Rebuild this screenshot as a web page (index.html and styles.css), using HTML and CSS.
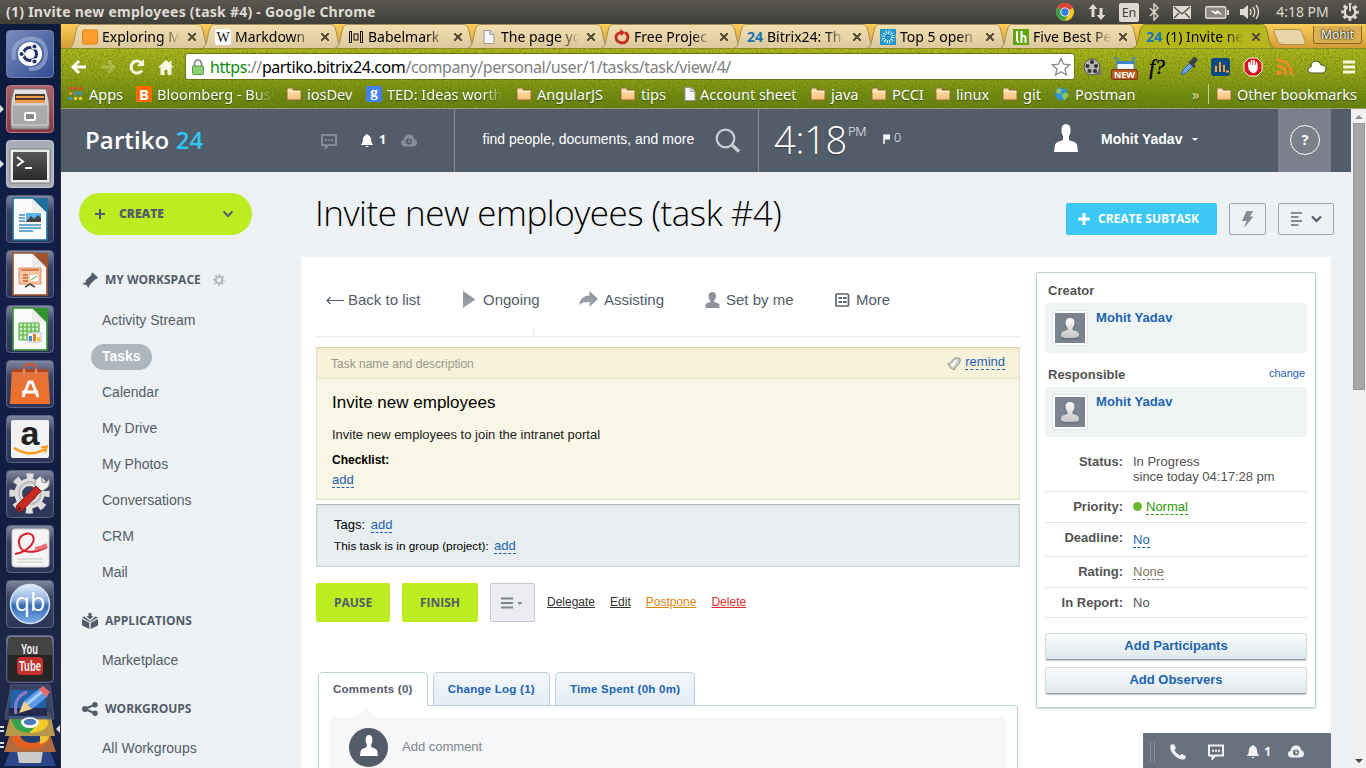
FILE: index.html
```html
<!DOCTYPE html>
<html lang="en">
<head>
<meta charset="utf-8">
<title>(1) Invite new employees (task #4)</title>
<link rel="stylesheet" href="styles.css">
</head>
<body>
<svg class="defs" width="0" height="0" aria-hidden="true">
  <defs>
    <linearGradient id="tile" x1="0" y1="0" x2="0" y2="1"><stop offset="0" stop-color="#8088a0"/><stop offset=".35" stop-color="#3a4261"/><stop offset="1" stop-color="#2b355a"/></linearGradient>
    <linearGradient id="tileBlue" x1="0" y1="0" x2="1" y2="1"><stop offset="0" stop-color="#7b8cbd"/><stop offset="1" stop-color="#314c94"/></linearGradient>
    <linearGradient id="tileRed" x1="0" y1="0" x2="0" y2="1"><stop offset="0" stop-color="#a8646c"/><stop offset="1" stop-color="#8c3442"/></linearGradient>
    <linearGradient id="silver" x1="0" y1="0" x2="0" y2="1"><stop offset="0" stop-color="#e8e8e8"/><stop offset="1" stop-color="#a2a2a2"/></linearGradient>
    <linearGradient id="darkGrey" x1="0" y1="0" x2="0" y2="1"><stop offset="0" stop-color="#585858"/><stop offset="1" stop-color="#2a2a2a"/></linearGradient>
    <linearGradient id="orange" x1="0" y1="0" x2="0" y2="1"><stop offset="0" stop-color="#e0733e"/><stop offset="1" stop-color="#f0702a"/></linearGradient>
    <linearGradient id="tabFill" x1="0" y1="0" x2="0" y2="1"><stop offset="0" stop-color="#f2e0b0"/><stop offset="1" stop-color="#dcc89e"/></linearGradient>
    <linearGradient id="folderFill" x1="0" y1="0" x2="0" y2="1"><stop offset="0" stop-color="#ffe5b5"/><stop offset="1" stop-color="#f7c078"/></linearGradient>
    <linearGradient id="orb" x1="0" y1="0" x2="0" y2="1"><stop offset="0" stop-color="#e4effb"/><stop offset=".4" stop-color="#8cb0de"/><stop offset=".55" stop-color="#3468b2"/><stop offset="1" stop-color="#7fb2ea"/></linearGradient>
    <linearGradient id="greySil" x1="0" y1="0" x2="0" y2="1"><stop offset="0" stop-color="#8b909a"/><stop offset="1" stop-color="#a0a5ae"/></linearGradient>
    <linearGradient id="whiteSil" x1="0" y1="0" x2="0" y2="1"><stop offset="0" stop-color="#fff"/><stop offset="1" stop-color="#c4c4c4"/></linearGradient>
    <filter id="grain" x="0" y="0" width="100%" height="100%"><feTurbulence type="fractalNoise" baseFrequency=".55 .6" numOctaves="2" seed="4"/><feColorMatrix values="0 0 0 0 .1  0 0 0 0 .16  0 0 0 0 0  2.2 0 0 0 -.85"/></filter>
    <symbol id="folder" viewBox="0 0 16 16"><path d="M1 4.500V3q0-1 1-1h4q1 0 1 1v1h7q1 0 1 1v8q0 1-1 1H2q-1 0-1-1z" fill="url(#folderFill)" stroke="#936b38"/><path d="M1.500 5.500h13" stroke="#fff1d2"/></symbol>
    <symbol id="sheet" viewBox="0 0 16 16"><path d="M3 1.500h6l4 4v9H3z" fill="#f6f6f6" stroke="#999"/><path d="M9 1.500v4h4" fill="#ddd" stroke="#999"/></symbol>
    <symbol id="man" viewBox="0 0 24 28"><path d="M7.500 6C7.500 2 9 0 12 0s4.500 2 4.500 6c0 3-.5 4.500-1.500 6v3.500c1 2 7 1.500 8 5.500l1 7H0l1-7c1-4 7-3.500 8-5.500V12C8 10.500 7.500 9 7.500 6z"/></symbol>
    <symbol id="chat" viewBox="0 0 16 15"><path d="M1 1h14v10H7l-2.500 3v-3H1z" fill="none" stroke="currentColor" stroke-width="2"/><path d="M4 5.200h2v2H4zM7 5.200h2v2H7zM10 5.200h2v2h-2z" fill="currentColor"/></symbol>
    <symbol id="bell" viewBox="0 0 12 13"><path d="M5.300 0h1.400v1C9.500 1.500 10 4 10.200 7c.1 2 1.800 3 1.800 4H0c0-1 1.700-2 1.800-4C2 4 2.500 1.500 5.300 1zM4.500 12h3l-.5 1H5z" fill="currentColor"/></symbol>
    <symbol id="cloud" viewBox="0 0 16 13"><path fill-rule="evenodd" d="M4 12.500C1.500 12.500 0 11 0 9c0-1.700 1-3 2.500-3.300C3 2.500 5 .5 8 .5s4.800 2 5.200 4.700C15 5.700 16 7 16 9c0 2-1.500 3.500-4 3.500zM8 4.500a3 3 0 1 0 0 6 3 3 0 0 0 0-6z" fill="currentColor"/><path d="M8 5.500v2.300h1.800" fill="none" stroke="currentColor" stroke-width="1.200"/></symbol>
    <symbol id="tabShape" viewBox="0 0 144 25"><path d="M0 24.500C5 24 5.500 18 7.500 9 9 2.500 10 .5 13.500.5h116c3.500 0 4.500 2 6 8.500 2 9 2.500 15 8 15.500"/></symbol>
    <symbol id="gear" viewBox="0 0 24 24"><circle cx="12" cy="12" r="6.600" fill="none" stroke="currentColor" stroke-width="4.400"/><circle cx="12" cy="12" r="10" fill="none" stroke="currentColor" stroke-width="3.600" stroke-dasharray="3.927" stroke-dashoffset="1.960"/></symbol>
    <symbol id="doc" viewBox="0 0 48 48"><path d="M7 3h20l14 14v28H7z" fill="#fafafa" stroke="currentColor" stroke-width="1.600"/><path d="M27 3h15v15z" fill="currentColor"/><path d="M26 4v13h14" fill="#ddd" opacity=".5"/></symbol>
  </defs>
</svg>

<div class="screen">
  <header class="menubar">
    <div class="window-title">(1) Invite new employees (task #4) - Google Chrome</div>
    <div class="indicators">
      <svg width="20" height="20" viewBox="0 0 20 20"><circle cx="10" cy="10" r="9" fill="#f7cb1d"/><path d="M10 10 2.200 5.500A9 9 0 0 1 18 6z" fill="#db4437"/><path d="M10 10 2.200 5.500A9 9 0 0 0 9.500 19l4-7z" fill="#3c9f4b"/><circle cx="10" cy="10" r="4.600" fill="#fff"/><circle cx="10" cy="10" r="3.700" fill="#3a7de0"/></svg>
      <svg width="18" height="18" viewBox="0 0 18 18" fill="#dfdbd2"><path d="M5 1l4.500 5H6.500v8h-3V6H.5zM13 17l-4.500-5h3V5h3v7h3z"/></svg>
      <span class="keyboard">En</span>
      <svg width="10" height="18" viewBox="0 0 10 18"><path d="M1 5l8 8-4 4V1l4 4-8 8" fill="none" stroke="#dfdbd2" stroke-width="1.400"/></svg>
      <svg width="18" height="13" viewBox="0 0 18 13"><rect width="18" height="13" fill="#dfdbd2"/><path d="M1 1l8 7 8-7M1 12l5-5M17 12l-5-5" fill="none" stroke="#4a4840" stroke-width="1.200"/></svg>
      <svg width="24" height="13" viewBox="0 0 24 13"><rect x=".7" y=".7" width="20" height="11.600" rx="1.500" fill="#8a8880" stroke="#dfdbd2" stroke-width="1.400"/><path d="M22 4h2v5h-2z" fill="#dfdbd2"/><path d="M5 4l6 2 1-2 6 5-6-2-1 2z" fill="#fff"/></svg>
      <svg width="20" height="16" viewBox="0 0 20 16"><path d="M0 5h3l5-4v14l-5-4H0z" fill="#dfdbd2"/><path d="M10 5q2 3 0 6M13 3q3.500 5 0 10M16 1q5 7 0 14" fill="none" stroke="#dfdbd2" stroke-width="1.400"/></svg>
      <span class="clock">4:18 PM</span>
      <svg width="18" height="18" viewBox="0 0 24 24" color="#dfdbd2"><use href="#gear"/><circle cx="12" cy="12" r="5.500" fill="#4a4840"/><path d="M12 2v8" stroke="#4a4840" stroke-width="6"/><path d="M12 1v10" stroke="#dfdbd2" stroke-width="2.500"/></svg>
    </div>
  </header>

  <div class="desktop">
    <nav class="launcher">
      <svg viewBox="0 0 48 48"><rect x=".5" y=".5" width="47" height="47" rx="4" fill="url(#tileBlue)" stroke="#7381ad"/><path d="M8 30Q5 12 22 9q18-2 18 16-2 15-17 14" fill="none" stroke="#a5b4d8" stroke-width="4" opacity=".6"/><circle cx="24" cy="24" r="12" fill="#fff"/><circle cx="24" cy="24" r="6.500" fill="none" stroke="#213569" stroke-width="3"/><g fill="#213569" stroke="#fff" stroke-width="1.200"><circle cx="15.500" cy="24" r="2.700"/><circle cx="28.500" cy="16.500" r="2.700"/><circle cx="28.500" cy="31.500" r="2.700"/></g></svg>
      <svg viewBox="0 0 48 48"><rect x=".5" y=".5" width="47" height="47" rx="4" fill="url(#tileRed)" stroke="#bb7b85"/><path d="M8 4h32l3 12v26q0 2-2 2H7q-2 0-2-2V16z" fill="url(#silver)" stroke="#777"/><path d="M9 9h30v9H9z" fill="#4d3a2c"/><path d="M10 11h28v2H10zM9 15h30v3H9z" fill="#f29b4c"/><path d="M6 20h36v20H6z" fill="#a9a9a9" stroke="#d8d8d8"/><rect x="19" y="28" width="10" height="7" rx="1" fill="#888" stroke="#fff" stroke-width="2"/></svg>
      <svg viewBox="0 0 48 48"><rect x=".5" y=".5" width="47" height="47" rx="4" fill="#a9adb7" stroke="#c6c9d0"/><rect x="4" y="9" width="40" height="34" rx="1" fill="#eee" stroke="#777"/><rect x="7" y="12" width="34" height="28" fill="url(#darkGrey)"/><path d="M11 17l6 4.500-6 4.500M19 28h7" fill="none" stroke="#fff" stroke-width="2"/></svg>
      <svg viewBox="0 0 48 48"><rect x=".5" y=".5" width="47" height="47" rx="4" fill="url(#tile)" stroke="#5a6382"/><use href="#doc" color="#1f6d9c"/><path d="M13 20h6M13 23h6M13 26h6M13 30h22M13 33h22M13 36h14" stroke="#3c8fc4" stroke-width="1.600"/><path d="M20 18h15v9H20z" fill="#59b4e8"/><path d="M20 27l5-6 3 3 4-4 3 3v4z" fill="#444"/></svg>
      <svg viewBox="0 0 48 48"><rect x=".5" y=".5" width="47" height="47" rx="4" fill="url(#tile)" stroke="#5a6382"/><use href="#doc" color="#a0522e"/><path d="M13 18h22v16H13z" fill="#f6c4a6" stroke="#e3905f"/><path d="M15 20h18M17 25h5M17 28h5M17 31h5" stroke="#cb6535" stroke-width="1.500"/><path d="M24 25h8v6h-8z" fill="#fff"/><path d="M25 30l3-2 3-2" stroke="#3eb13b" fill="none"/><path d="M19 37l5-3 5 3" fill="none" stroke="#444" stroke-width="1.500"/></svg>
      <svg viewBox="0 0 48 48"><rect x=".5" y=".5" width="47" height="47" rx="4" fill="url(#tile)" stroke="#5a6382"/><use href="#doc" color="#339330"/><path d="M13 18h20v17H13z" fill="#cdf0c3"/><path d="M13 18h20M13 22h20M13 26h20M13 30h20M13 35h12M13 18v17M17 18v17M21 18v17M25 18v10M29 18v9M33 18v9" stroke="#55ad43" stroke-width="1.200"/><path d="M22 28h13v9H22z" fill="#fff" stroke="#bbb"/><path d="M23 31h3v5h-3z" fill="#3d8fd1"/><path d="M27 29h3v7h-3z" fill="#e8772e"/><path d="M31 32h3v4h-3z" fill="#edc431"/></svg>
      <svg viewBox="0 0 48 48"><rect x=".5" y=".5" width="47" height="47" rx="4" fill="url(#tile)" stroke="#5a6382"/><path d="M18 14V8q1-4 6-4t6 4v6" fill="none" stroke="#c8583a" stroke-width="2.500"/><path d="M6 9h36l2 35H4z" fill="url(#orange)"/><path d="M6 9h36v3H6z" fill="#a84725"/><path d="M18 9v5M30 9v5" stroke="#e58a68" stroke-width="2.500"/><path d="M17 37l6-15h3l6 15M16 32h16" fill="none" stroke="#fff" stroke-width="3"/></svg>
      <svg viewBox="0 0 48 48"><rect x=".5" y=".5" width="47" height="47" rx="4" fill="url(#tile)" stroke="#5a6382"/><rect x="5" y="5" width="38" height="38" rx="2" fill="#f2f2f2"/><text x="24" y="30" text-anchor="middle" class="glyph-amazon">a</text><path d="M8 33q16 10 31 1" fill="none" stroke="#f79a1c" stroke-width="2.500"/><path d="M35 32.500l6-1-2 6" fill="none" stroke="#f79a1c" stroke-width="2"/></svg>
      <svg viewBox="0 0 48 48"><rect x=".5" y=".5" width="47" height="47" rx="4" fill="url(#tile)" stroke="#5a6382"/><svg class="cog" x="3" y="3" width="41" height="41" viewBox="0 0 24 24" color="#dedede"><use href="#gear"/></svg><circle cx="24" cy="23" r="11" fill="none" stroke="#bcbcbc" stroke-width="2"/><path d="M29 16q-1-7 6-10l1 6 4 1 3-4q2 8-5 11l-3 1L32 20z" fill="#f1f1f1" stroke="#8b8b8b"/><path d="M30 16l5 5L16 41q-3 2-5-1-2-2 0-5z" fill="#c92a21" stroke="#871711"/><circle cx="13.500" cy="38.500" r="1.500" fill="#3b1a18"/></svg>
      <svg viewBox="0 0 48 48"><rect x=".5" y=".5" width="47" height="47" rx="4" fill="url(#tile)" stroke="#5a6382"/><rect x="6" y="4" width="37" height="38" rx="3" fill="#f5f5f5" stroke="#ccc"/><path d="M9 29C22 27 30 17 27 11c-3-5-15-2-14 7 1 11 14 11 28 4" fill="none" stroke="#d5252f" stroke-width="2"/><path d="M29 24q6-1 12-4" stroke="#f0767c" stroke-width="4" fill="none"/><path d="M11 34h26M11 37h26" stroke="#c6c6c6"/></svg>
      <svg viewBox="0 0 48 48"><rect x=".5" y=".5" width="47" height="47" rx="4" fill="url(#tile)" stroke="#5a6382"/><circle cx="24" cy="24" r="19.500" fill="url(#orb)" stroke="#d5e4f5" stroke-width="1.500"/><text x="24" y="31" text-anchor="middle" class="glyph-qb">qb</text></svg>
      <svg viewBox="0 0 48 48"><rect x=".5" y=".5" width="47" height="47" rx="4" fill="url(#tile)" stroke="#5a6382"/><rect x="2" y="2" width="44" height="44" rx="4" fill="#272424"/><path d="M2 6q0-4 4-4h36q4 0 4 4v14H2z" fill="#625f5f" opacity=".5"/><rect x="11" y="22" width="26" height="18" rx="4" fill="#c4302b"/><text x="15" y="19" textLength="17" lengthAdjust="spacingAndGlyphs" class="glyph-tube">You</text><text x="13" y="36" textLength="22" lengthAdjust="spacingAndGlyphs" class="glyph-tube">Tube</text></svg>
      <svg class="stack" viewBox="0 0 61 84"><path d="M10 67h40l6 15H4z" fill="#2c4687"/><path d="M17 67h26l-2 12H19z" fill="#c9cac9"/><path d="M10 50h40l6 18H4z" fill="#b16a40"/><path d="M12 52h36q0 13-18 13T12 52z" fill="#e2611c"/><path d="M20 52h24q-2 7-12 7-9 0-12-7z" fill="#203e73"/><path d="M40 52h9q0 6-9 8z" fill="#f0c23a"/><path d="M11 28h39l5 24H5z" fill="#b79749"/><ellipse cx="30" cy="39" rx="18" ry="10" fill="#f0cd28"/><path d="M12 37q2-12 32-6l-14 6z" fill="#d64a37"/><path d="M12 36q0 12 17 13l7-7-13-5-8-5z" fill="#37a34c"/><ellipse cx="30" cy="38" rx="8" ry="5" fill="#4a7bb8" stroke="#fff" stroke-width="2"/><path d="M11 1h39l4 34H5z" fill="#3d4866" opacity=".85" stroke="#5b6584"/><ellipse cx="30" cy="38" rx="7" ry="4" fill="#4a7bb8" stroke="#fff" stroke-width="1.500"/><path d="M11 6h34l2 27H9z" fill="#2162a7"/><path d="M9 24h38v8H9z" fill="#25294c"/><path d="M27 8q-14 5-11 22" fill="none" stroke="#8d7bc6" stroke-width="3"/><path d="M24 17 40 4l8 8-16 13z" fill="#5b9be8"/><path d="M27 20 43 7" stroke="#a9d0fa" stroke-width="3"/><path d="M24 17l8 8-13 4z" fill="#f3d190"/><path d="M39 5l4-3 7 6-4 5z" fill="#e86c6c"/><path d="M0 43h4M0 47h4M0 59h4M0 63h4" stroke="#ddd" stroke-width="2"/><path d="M60 41v8l-4-4z" fill="#ddd"/></svg>
      <i class="pip pip-files"></i><i class="pip pip-terminal"></i>
    </nav>

    <section class="browser">
      <div class="tabstrip">
        <div class="tab"><svg class="tab-bg"><use href="#tabShape"/></svg><svg class="fav" viewBox="0 0 16 16"><rect x=".5" y="1" width="15" height="14" rx="1.500" fill="#ff9d2e" stroke="#e07f12"/></svg><span class="tab-title">Exploring M</span><b class="close"></b></div>
        <div class="tab"><svg class="tab-bg"><use href="#tabShape"/></svg><svg class="fav" viewBox="0 0 16 16"><rect width="16" height="16" rx="2" fill="#fff"/><text x="8" y="13" text-anchor="middle" class="glyph-w">W</text></svg><span class="tab-title">Markdown</span><b class="close"></b></div>
        <div class="tab"><svg class="tab-bg"><use href="#tabShape"/></svg><svg class="fav" viewBox="0 0 16 16" fill="none" stroke="#111"><path d="M4 2.500H1.500v11H4M3.500 2.500v11M12 2.500h2.500v11H12M12.500 2.500v11"/><rect x="6" y="5" width="4" height="6"/></svg><span class="tab-title">Babelmark</span><b class="close"></b></div>
        <div class="tab"><svg class="tab-bg"><use href="#tabShape"/></svg><svg class="fav" viewBox="0 0 16 16"><use href="#sheet"/></svg><span class="tab-title">The page yo</span><b class="close"></b></div>
        <div class="tab"><svg class="tab-bg"><use href="#tabShape"/></svg><svg class="fav" viewBox="0 0 16 16"><path d="M11 3.500Q14 5 14 8.500 13 14 8 14 2 13 2 8.500 2 4 8 3.500" fill="none" stroke="#c62a20" stroke-width="2.800"/><path d="M6 0l5 3.500L7 7z" fill="#c62a20"/></svg><span class="tab-title">Free Projec</span><b class="close"></b></div>
        <div class="tab"><svg class="tab-bg"><use href="#tabShape"/></svg><span class="fav fav24">24</span><span class="tab-title">Bitrix24: Th</span><b class="close"></b></div>
        <div class="tab"><svg class="tab-bg"><use href="#tabShape"/></svg><svg class="fav" viewBox="0 0 16 16"><rect width="16" height="16" fill="#1e94c8"/><circle cx="8" cy="8" r="4.500" fill="none" stroke="#fff" stroke-width="3" stroke-dasharray="1 1.350"/><circle cx="8" cy="8" r="7" fill="none" stroke="#bde7fa" stroke-dasharray="1 2"/></svg><span class="tab-title">Top 5 open</span><b class="close"></b></div>
        <div class="tab"><svg class="tab-bg"><use href="#tabShape"/></svg><svg class="fav" viewBox="0 0 16 16"><rect width="16" height="16" fill="#61a510"/><path d="M4 2v9q0 2 2 2M8.500 2v12M8.500 9q0-2 2-2t2 2v5" fill="none" stroke="#fff" stroke-width="2"/></svg><span class="tab-title">Five Best Pe</span><b class="close"></b></div>
        <div class="tab active"><svg class="tab-bg"><use href="#tabShape"/></svg><span class="fav fav24">24</span><span class="tab-title">(1) Invite ne</span><b class="close"></b></div>
        <svg class="newtab" width="34" height="16" viewBox="0 0 34 16"><path d="M2 .5h23q3 0 4 3l3 9q1 3-2 3H10q-4 0-5-3L1 3Q0 .5 2 .5z" fill="#e8d5a7" stroke="#b28f4c"/></svg>
        <span class="profile">Mohit</span>
      </div>
      <div class="chrome">
        <svg class="grain" width="1305" height="60"><rect width="1305" height="60" filter="url(#grain)"/></svg>
        <div class="toolbar">
          <div class="nav-buttons">
            <svg width="18" height="18" viewBox="0 0 18 18"><path d="M9 3 3 9l6 6M3 9h13" fill="none" stroke="#fff" stroke-width="3"/></svg>
            <svg width="18" height="18" viewBox="0 0 18 18" opacity=".3"><path d="M9 3l6 6-6 6M15 9H2" fill="none" stroke="#e5eab0" stroke-width="3"/></svg>
            <svg width="18" height="18" viewBox="0 0 18 18"><path d="M14 12.500A6 6 0 1 1 13 4.500" fill="none" stroke="#f6f8e4" stroke-width="3"/><path d="M9.500 8V7l6.500-6v7z" fill="#f6f8e4"/></svg>
            <svg width="18" height="18" viewBox="0 0 18 18"><path d="M9 2 1 9.500h2.500V17h4v-5h3v5h4V9.500H17l-2.500-2.300V3h-2v2.200z" fill="#f6f8e4"/></svg>
          </div>
          <div class="omnibox">
            <svg width="12" height="16" viewBox="0 0 12 16"><path d="M2.500 8V4.500Q3 1 6 1t3.500 3.500V8" fill="none" stroke="#888" stroke-width="1.700"/><rect x=".5" y="7" width="11" height="8.500" rx="1" fill="#8cd172" stroke="#569a43"/></svg>
            <span class="url"><em>https</em>://<strong>partiko.bitrix24.com</strong>/company/personal/user/1/tasks/task/view/4/</span>
            <svg width="20" height="19" viewBox="0 0 20 19"><path d="M10 1.500l2.500 5.700 6.200.6-4.700 4.100 1.400 6.100L10 14.800 4.600 18 6 11.900 1.300 7.800l6.200-.6z" fill="#fff" stroke="#8a8a8a" stroke-width="1.300"/></svg>
          </div>
          <div class="extensions">
            <svg width="20" height="20" viewBox="0 0 20 20"><path d="M14 4q2 8 5 11l-1 3-7 0z" fill="#777"/><circle cx="9" cy="10" r="8" fill="#b5b5b5" stroke="#555"/><g fill="#333"><circle cx="9" cy="5" r="2"/><circle cx="4.500" cy="9" r="2"/><circle cx="13" cy="9" r="2"/><circle cx="6.500" cy="14" r="2"/><circle cx="12" cy="14" r="2"/></g></svg>
            <svg class="new-badge" width="28" height="24" viewBox="0 0 28 24"><path d="M6 4V1H3M22 4V1h3" stroke="#4a87c9" fill="none" stroke-width="1.500"/><path d="M6 5h17v8H6z" fill="#eef5fc" stroke="#4a87c9"/><path d="M6 4h17v3H6z" fill="#3f83c8"/><rect x=".5" y="12.500" width="26" height="10" rx="1.500" fill="#b75a21" stroke="#80390d"/><text x="13.500" y="21" text-anchor="middle" class="glyph-new">NEW</text></svg>
            <span class="fquery">f?</span>
            <svg width="20" height="20" viewBox="0 0 20 20"><path d="M2 18l2-5 7-7 3 3-7 7z" fill="#6da2ed" stroke="#355fa8"/><path d="M9 5l6 6 2-2-2-2 3-3q1-3-2-4-2 0-5 4z" fill="#3b3f46"/></svg>
            <svg width="20" height="20" viewBox="0 0 20 20"><rect x="0" y="1" width="19" height="18" rx="3" fill="#0a4a80"/><path d="M5 9v6M9 5v10M13 8v7M15 14.500h3" stroke="#ffa13a" stroke-width="2"/></svg>
            <svg width="20" height="20" viewBox="0 0 20 20"><path d="M6 1h8l5 5v8l-5 5H6l-5-5V6z" fill="#d41920" stroke="#f7f2ee"/><path d="M6 9V6M8.500 9V4M11 9V4M13.500 10V6" stroke="#fff" stroke-width="1.800" stroke-linecap="round"/><path d="M5.500 8h9v4q-1 4-4 4-3 0-5-4z" fill="#fff"/></svg>
            <svg width="20" height="20" viewBox="0 0 20 20"><circle cx="4" cy="16" r="2.500" fill="#ee8a29"/><path d="M2 9q8 0 9 9M2 3q14 1 15 15" fill="none" stroke="#ee8a29" stroke-width="3"/></svg>
            <svg width="20" height="14" viewBox="0 0 20 14"><path d="M4 13Q0 12 1 9q0-2 3-2 0-6 5-6 4 0 5 4 5 0 5 4 0 3-3 4z" fill="#fff" stroke="#46531a"/></svg>
            <svg width="14" height="16" viewBox="0 0 14 16"><path d="M1 3h12M1 8h12M1 13h12" stroke="#f5f7dc" stroke-width="3"/></svg>
          </div>
        </div>
        <div class="bookmarks">
          <span><svg viewBox="0 0 16 16"><path d="M1 1h3v3H1zM6 1h3v3H6zM11 1h3v3h-3z" fill="#e8402d"/><path d="M1 6h3v3H1z" fill="#e8902d"/><path d="M6 6h3v3H6zM11 6h3v3h-3zM1 11h3v3H1z" fill="#3f8fe8"/><path d="M6 11h3v3H6zM11 11h3v3h-3z" fill="#f3ca34"/></svg>Apps</span>
          <span><i class="ico bb">B</i><em class="fade">Bloomberg - Busi</em></span>
          <span><svg viewBox="0 0 16 16"><use href="#folder"/></svg>iosDev</span>
          <span><i class="ico gg">g</i><em class="fade">TED: Ideas worth</em></span>
          <span><svg viewBox="0 0 16 16"><use href="#folder"/></svg>AngularJS</span>
          <span><svg viewBox="0 0 16 16"><use href="#folder"/></svg>tips</span>
          <span class="tight"><svg viewBox="0 0 16 16"><use href="#sheet"/></svg>Account sheet</span>
          <span><svg viewBox="0 0 16 16"><use href="#folder"/></svg>java</span>
          <span><svg viewBox="0 0 16 16"><use href="#folder"/></svg>PCCI</span>
          <span><svg viewBox="0 0 16 16"><use href="#folder"/></svg>linux</span>
          <span><svg viewBox="0 0 16 16"><use href="#folder"/></svg>git</span>
          <span><svg viewBox="0 0 16 16"><circle cx="7.500" cy="8" r="6.500" fill="#2f91d0"/><path d="M3 3q4-1 5 1l-2 4-4-1zM8 8l4-2 3 3-4 5q-3-1-3-6z" fill="#8cc46a"/></svg>Postman</span>
          <span class="more">»</span>
          <i class="divider"></i>
          <span><svg viewBox="0 0 16 16"><use href="#folder"/></svg>Other bookmarks</span>
        </div>
      </div>

      <div class="viewport">
        <div class="page">
          <header class="top">
            <div class="logo">Partiko <span>24</span></div>
            <div class="notices">
              <svg width="16" height="15"><use href="#chat"/></svg>
              <svg class="on" width="12" height="13"><use href="#bell"/></svg><b>1</b>
              <svg width="16" height="13"><use href="#cloud"/></svg>
            </div>
            <div class="search"><span>find people, documents, and more</span><svg width="26" height="26" viewBox="0 0 26 26" fill="none" stroke="#c9ced5"><circle cx="10.500" cy="10.500" r="8.800" stroke-width="2.200"/><path d="M16.500 16.500l7.500 7" stroke-width="3.400"/></svg></div>
            <div class="time"><span class="hm">4:18</span><sup>PM</sup><svg width="8" height="10" viewBox="0 0 8 10"><path d="M1 .5V10" stroke="#fff" stroke-width="1.500"/><path d="M1 .5h6v5H1z" fill="#fff"/></svg><span class="flags">0</span></div>
            <div class="user"><svg width="24" height="28" fill="#fff"><use href="#man"/></svg><b>Mohit Yadav</b><i></i></div>
            <div class="help"><span>?</span></div>
          </header>

          <div class="body">
            <aside class="side">
              <div class="create"><svg width="12" height="12" viewBox="0 0 12 12"><path d="M6 1v10M1 6h10" stroke="#535c69" stroke-width="2"/></svg><b>CREATE</b><svg width="12" height="8" viewBox="0 0 12 8"><path d="M1.500 1.500 6 6l4.500-4.500" fill="none" stroke="#535c69" stroke-width="2"/></svg></div>
              <h4><svg width="16" height="16" viewBox="0 0 16 16"><path d="M10.500.5 16 5.500 14.500 7 13 7.500 8 12.500 6.500 16 4.500 13 0 12 4 10 3.500 8.500 9 3.500 9.500 1.500z" fill="#535c69"/></svg>MY WORKSPACE<svg class="gear" width="12" height="12" viewBox="0 0 24 24" color="#b4bac1"><use href="#gear"/></svg></h4>
              <a>Activity Stream</a><a class="current"><span>Tasks</span></a><a>Calendar</a><a>My Drive</a><a>My Photos</a><a>Conversations</a><a>CRM</a><a>Mail</a>
              <h4 class="later"><svg width="16" height="16" viewBox="0 0 16 16" fill="#535c69"><path d="M6.500 0h3v3h2L8 6.500 4.500 3h2z"/><path d="M0 4.500l2.500-1L8 8l5.500-4.500 2.500 1L8 9zM0 6l7.300 3.700V16L0 12.500zM16 6 8.700 9.700V16l7.300-3.500z"/></svg>APPLICATIONS</h4>
              <a>Marketplace</a>
              <h4 class="later"><svg width="16" height="14" viewBox="0 0 16 14"><path d="M13 2.500 3 7l10 4.500" fill="none" stroke="#535c69" stroke-width="2"/><g fill="#535c69"><circle cx="13" cy="2.700" r="2.700"/><circle cx="3" cy="7" r="3"/><circle cx="13" cy="11.300" r="2.700"/></g></svg>WORKGROUPS</h4>
              <a>All Workgroups</a>
            </aside>

            <div class="work">
              <div class="heading">
                <h1>Invite new employees (task #4)</h1>
                <div class="btn-sub"><svg width="12" height="12" viewBox="0 0 12 12"><path d="M6 0v12M0 6h12" stroke="#fff" stroke-width="3"/></svg><span>CREATE SUBTASK</span></div>
                <div class="btn-o bolt"><svg width="12" height="17" viewBox="0 0 12 17"><path d="M4.500 0H11L8 5.500h3.500L2 17l2.500-7H0z" fill="#868b96"/></svg></div>
                <div class="btn-o list"><svg width="11" height="14" viewBox="0 0 11 14"><path d="M0 1h11M0 5h7.500M0 9h11M0 13h7.500" stroke="#868b96" stroke-width="2"/></svg><svg width="11" height="8" viewBox="0 0 11 8"><path d="M1 1.500l4.500 4.500L10 1.500" fill="none" stroke="#535c69" stroke-width="2.200"/></svg></div>
              </div>

              <div class="sheet">
                <div class="task">
                  <div class="tasknav">
                    <span><svg class="back" width="22" height="16" viewBox="0 0 22 16"><path d="M4.500 5 1 8.500 4.500 12M1 8.500h17" fill="none" stroke="#535c69" stroke-width="1.100"/></svg>Back to list</span>
                    <span><svg width="20" height="17" viewBox="0 0 20 17"><path d="M0 0l12.500 8.500L0 17z" fill="url(#greySil)"/></svg>Ongoing</span>
                    <span><svg width="25" height="17" viewBox="0 0 25 17"><path d="M0 14q1-9 10.500-9.500V0L19 8l-8.500 8v-5Q4 10.500 0 14z" fill="url(#greySil)"/></svg>Assisting</span>
                    <span><svg width="21" height="16" viewBox="0 0 21 16"><path d="M3.500 4.500Q3.500 0 7.300 0T11 4.500Q10.700 8 9 9v1q5 1 5.500 2.500V15q0 1-1 1h-12q-1 0-1-1v-2.500q0-1.500 5-2.500V9Q3.700 8 3.500 4.500z" fill="#8d929c"/></svg>Set by me</span>
                    <span><svg width="21" height="14" viewBox="0 0 21 14"><rect x="1" y="1" width="12.500" height="12" rx="1" fill="none" stroke="#5a6370" stroke-width="1.700"/><path d="M3.500 5h3.500M8 5h3.500M3.500 9h3.500M8 9h3.500" stroke="#5a6370" stroke-width="2"/></svg>More</span>
                    <i class="tick"></i>
                  </div>
                  <div class="desc">
                    <div class="desc-head"><span>Task name and description</span><svg width="14" height="14" viewBox="0 0 14 14"><path d="M.8 6.500 2 7l5-5.500Q10 0 13 1.500 14 5 11 8l-3 3-.5 2L5.500 12 2.500 10z" fill="#cfcfcb" stroke="#8a8a84" stroke-width=".9"/><path d="M4 8l5-5.500L10 4l-4 6z" fill="#fbfbf8"/></svg><a class="dash">remind</a></div>
                    <div class="desc-body">
                      <h2>Invite new employees</h2>
                      <p>Invite new employees to join the intranet portal</p>
                      <b>Checklist:</b>
                      <div class="addline"><a class="dash">add</a></div>
                    </div>
                  </div>
                  <div class="meta">
                    <div class="tags">Tags: <a class="dash">add</a></div>
                    <div class="group">This task is in group (project): <a class="dash">add</a></div>
                  </div>
                  <div class="actions">
                    <div class="go pause">PAUSE</div><div class="go finish">FINISH</div>
                    <div class="menu"><svg width="21" height="12" viewBox="0 0 21 12"><path d="M0 1.500h12M0 6h12M0 10.500h12" stroke="#80868e" stroke-width="2"/><path d="M16 5h5.500L18.700 8z" fill="#80868e"/></svg></div>
                    <a>Delegate</a><a>Edit</a><a class="postpone">Postpone</a><a class="delete">Delete</a>
                  </div>
                  <div class="ctabs"><span class="sel">Comments (0)</span><span>Change Log (1)</span><span>Time Spent (0h 0m)</span></div>
                  <div class="cpanel">
                    <div class="cbox"><i class="notch"></i><div class="avatar"><svg width="18" height="21" viewBox="0 0 24 28" fill="#fff"><use href="#man"/></svg></div><span>Add comment</span></div>
                  </div>
                </div>

                <div class="info">
                  <div class="cap"><b>Creator</b></div>
                  <div class="person"><div class="pic"><svg width="18" height="20" viewBox="0 0 18 20"><path d="M4.500 5Q4.500 0 9 0t4.500 5Q13 9 11.500 10v2q6 1 6.500 4v2q0 2-9 2t-9-2v-2q.5-3 6.500-4v-2Q5 9 4.500 5z" fill="url(#whiteSil)"/></svg></div><b>Mohit Yadav</b></div>
                  <div class="cap second"><b>Responsible</b><a>change</a></div>
                  <div class="person"><div class="pic"><svg width="18" height="20" viewBox="0 0 18 20"><path d="M4.500 5Q4.500 0 9 0t4.500 5Q13 9 11.500 10v2q6 1 6.500 4v2q0 2-9 2t-9-2v-2q.5-3 6.500-4v-2Q5 9 4.500 5z" fill="url(#whiteSil)"/></svg></div><b>Mohit Yadav</b></div>
                  <div class="row status"><b>Status:</b><span>In Progress<br>since today 04:17:28 pm</span></div>
                  <div class="row priority"><b>Priority:</b><span><i class="dot"></i><a class="dash">Normal</a></span></div>
                  <div class="row deadline"><b>Deadline:</b><span><a class="dash">No</a></span></div>
                  <div class="row rating"><b>Rating:</b><span><a class="dash">None</a></span></div>
                  <div class="row report"><b>In Report:</b><span>No</span></div>
                  <div class="wide">Add Participants</div>
                  <div class="wide observers">Add Observers</div>
                </div>
              </div>
            </div>
          </div>

          <div class="dock">
            <i class="grip"></i>
            <svg width="16" height="16" viewBox="0 0 16 16"><path d="M1 .5l3-.3 2 4-1.700 1.700Q6 9.500 10 11.500l1.800-1.700 4 2.200-.5 2.700Q12 17 7 13.500 1.500 9.500.3 5 0 2 1 .5z" fill="currentColor"/></svg>
            <svg width="16" height="16"><use href="#chat"/></svg>
            <svg width="12" height="13"><use href="#bell"/></svg><b>1</b>
            <svg width="16" height="13"><use href="#cloud"/></svg>
          </div>
        </div>
        <div class="scrollbar"><i class="up"></i><i class="thumb"></i><i class="down"></i></div>
      </div>
    </section>
  </div>
</div>
</body>
</html>
```

FILE: styles.css
```css
* { box-sizing: border-box; }
body { margin: 0; width: 1366px; height: 768px; overflow: hidden; font-family: "Liberation Sans", Arial, sans-serif; font-size: 13px; color: #000; }
svg { display: block; flex: none; }
.defs { position: absolute; }
i, em { font-style: normal; }
h1, h2, h4, p { margin: 0; font-weight: normal; }
.screen { display: flex; flex-direction: column; width: 1366px; height: 768px; overflow: hidden; }

/* desktop menu bar */
.menubar { display: flex; justify-content: space-between; height: 24px; background: linear-gradient(#5a5850, #3e3d38); font-family: "Noto Sans", sans-serif; color: #dfdbd2; }
.window-title { padding-left: 6px; font-size: 14px; font-weight: 700; line-height: 23px; letter-spacing: .25px; white-space: nowrap; }
.indicators { display: grid; grid-template-columns: 32px 32px 32px 18px 38px 32px 34px 71px 24px; padding-right: 4px; place-items: center; }
.keyboard { width: 20px; height: 19px; border-radius: 2px; background: #dfdbd2; color: #3c3b37; font-size: 12.500px; line-height: 19px; text-align: center; }
.clock { font-size: 14px; line-height: 24px; white-space: nowrap; }

.desktop { display: flex; height: 744px; }

/* launcher */
.launcher { position: relative; display: flex; flex-direction: column; align-items: center; gap: 7px; width: 61px; height: 744px; padding: 6px 1px 0 0; overflow: hidden; background: linear-gradient(#0c1b3d, #131f4a 40%, #101d40 70%, #22294b 88%, #101e45); border-right: 1px solid #2c2c34; }
.launcher > svg { width: 48px; height: 48px; }
.launcher > .stack { width: 61px; height: 84px; margin: -6px -1px 0 0; }
.glyph-amazon { font: 700 34px "Liberation Sans", sans-serif; fill: #222; }
.glyph-qb { font: 25px "Open Sans", sans-serif; fill: #fff; }
.glyph-tube { font: 700 14px "Liberation Sans", sans-serif; fill: #eee; }
.glyph-w { font: 14px "Liberation Serif", serif; fill: #111; }
.glyph-new { font: 700 9px "Noto Sans", sans-serif; fill: #fff; }
.pip { position: absolute; left: 0; width: 0; height: 0; border: 4px solid transparent; border-left-color: #ddd; border-right-width: 0; }
.pip-files { top: 81px; }
.pip-terminal { top: 136px; }

/* browser frame */
.browser { width: 1305px; font-family: "Noto Sans", sans-serif; }
.tabstrip { display: flex; height: 24px; padding-left: 7px; background: linear-gradient(#fccf58, #d49c33); }
.tab { position: relative; display: flex; align-items: center; width: 133px; height: 24px; padding: 2px 0 0 14px; flex: none; }
.tab-bg { position: absolute; left: 0; top: 0; width: 144px; height: 25px; fill: url(#tabFill); stroke: #a78b54; }
.tab.active .tab-bg { fill: #b5b71c; stroke: #80801f; }
.fav, .tab-title, .close { position: relative; }
.fav { width: 16px; height: 16px; flex: none; }
.fav24 { font: 700 14px/16px "Open Sans", sans-serif; color: #1a73b8; }
.tab-title { width: 84px; margin-left: 4px; white-space: nowrap; font-size: 14px; line-height: 20px; -webkit-mask-image: linear-gradient(90deg, #000 70%, transparent 93%); mask-image: linear-gradient(90deg, #000 70%, transparent 93%); }
.close { width: 8px; height: 8px; margin-left: 2px; background: linear-gradient(45deg, transparent 41%, #5a503b 41% 59%, transparent 59%), linear-gradient(-45deg, transparent 41%, #5a503b 41% 59%, transparent 59%); }
.newtab { position: relative; margin: 5px 0 0 8px; }
.profile { width: 49px; height: 18px; margin: 2px 0 0 6px; border: 1px solid #87652a; border-top: 0; border-radius: 0 0 3px 3px; background: #dcb050; color: #fff; font-size: 12px; line-height: 17px; text-align: center; text-shadow: 0 0 2px #000, 0 0 2px #000; }
.chrome { position: relative; height: 61px; border-top: 1px solid #8c8a2a; border-bottom: 1px solid #a9a987; background: linear-gradient(#b0bb1f, #93a31a 45%, #718b14 80%, #6b8411); }
.grain { position: absolute; left: 0; top: 0; opacity: .6; }
.toolbar, .bookmarks { position: relative; }
.toolbar { display: flex; height: 32px; padding-top: 4px; }
.nav-buttons { display: flex; align-items: center; gap: 11px; width: 124px; height: 28px; padding-left: 9px; }
.omnibox { display: flex; align-items: center; width: 890px; height: 27px; padding: 0 3px 0 6px; border: 1px solid #6a7414; border-radius: 3px; background: #fff; }
.url { flex: 1; margin-left: 6px; color: #808080; font-size: 16px; line-height: 24px; letter-spacing: -.41px; white-space: nowrap; }
.url em { color: #0b8a0b; }
.url strong { color: #000; font-weight: 400; }
.extensions { display: grid; grid-template-columns: repeat(9, 32px); place-items: center; width: 288px; height: 28px; margin-left: 2px; }
.new-badge { margin-top: 4px; }
.fquery { font: italic 20px/20px "Liberation Serif", serif; -webkit-text-stroke: .4px #000; }
.bookmarks { display: grid; grid-template-columns: 68px 150px 80px 150px 104px 62px 128px 61px 64px 67px 52px 142px 12px 8px 1fr; align-items: center; height: 26px; padding-left: 7px; color: #fff; font-size: 14.500px; }
.bookmarks span { display: flex; align-items: center; line-height: 22px; height: 24px; margin-top: -1px; white-space: nowrap; text-shadow: 0 1px 1px #3b4a08; }
.bookmarks svg { width: 16px; height: 16px; margin-right: 5px; }
.bookmarks .tight svg { margin-right: 2px; }
.fade { width: 117px; -webkit-mask-image: linear-gradient(90deg, #000 82%, transparent); mask-image: linear-gradient(90deg, #000 82%, transparent); }
.ico { width: 16px; height: 16px; margin-right: 5px; font-weight: 700; font-size: 15px; line-height: 16px; text-align: center; text-shadow: none; }
.bb { background: #ff6a00; }
.gg { border-radius: 2px; background: #4682ea; font-family: "Liberation Serif", serif; line-height: 13px; }
.divider { width: 1px; height: 20px; background: #c6cf94; }
.bookmarks .more { margin-left: -4px; color: #e2e8b4; }

/* page */
.viewport { display: flex; height: 659px; font-family: "Liberation Sans", Arial, sans-serif; }
.page { position: relative; width: 1290px; height: 659px; overflow: hidden; background: #eef2f4; }
.top { display: flex; height: 63px; background: #535c69; color: #fff; }
.logo { width: 260px; padding-left: 24px; font: 600 24px/62px "Open Sans", sans-serif; letter-spacing: .1px; white-space: nowrap; }
.logo span { color: #2fc6f6; }
.notices { display: flex; align-items: center; width: 134px; border-right: 1px solid #858c96; color: #868d96; }
.notices svg { margin-top: 2px; }
.notices .on { margin: 0 0 0 24px; color: #fff; }
.notices b { width: 16px; margin-left: 6px; margin-right: 6px; margin-top: -1px; color: #fff; font: 700 12.500px/16px "Open Sans", sans-serif; }
.notices b + svg { margin-left: 0; margin-top: 0; }
.search { display: flex; align-items: center; width: 304px; padding-left: 27.500px; border-right: 1px solid #858c96; font-size: 14px; }
.search span { width: 232.500px; margin-top: -3px; }
.time { display: flex; width: 295px; padding-left: 15px; font-family: "Open Sans", sans-serif; font-weight: 300; }
.hm { width: 74px; font-size: 38px; line-height: 60px; letter-spacing: -.3px; text-shadow: 0 1px 1px #333a44; }
.time sup { width: 34px; font-size: 13px; line-height: 15px; margin-top: 15px; vertical-align: top; letter-spacing: -.3px; }
.time svg { margin-top: 25px; margin-left: 1px; }
.flags { margin: 20px 0 0 3px; font-size: 12.500px; line-height: 18px; }
.user { display: flex; width: 224px; height: 63px; padding-top: 15px; }
.user b { margin: 6px 0 0 23px; font-size: 14px; line-height: 18px; white-space: nowrap; }
.user i { width: 0; height: 0; margin: 14px 0 0 10px; border: 3px solid transparent; border-top-color: #fff; border-bottom-width: 0; }
.help { width: 53px; padding: 16px 0 0 12px; background: #7b808c; }
.help span { display: block; width: 30px; height: 30px; border: 1.500px solid #fff; border-radius: 50%; font: 700 15px/27px "Open Sans", sans-serif; text-align: center; }
.body { display: flex; height: 596px; }

/* sidebar */
.side { width: 240px; padding: 21px 0 0 18px; color: #535c69; }
.create { display: flex; align-items: center; width: 173px; height: 42px; margin-bottom: 23px; padding: 0 18px 0 15px; border-radius: 21px; background: #bbed21; font: 700 12px/42px "Open Sans", sans-serif; }
.create b { flex: 1; margin-left: 13px; }
.side h4 { display: flex; align-items: center; height: 44px; padding-left: 3px; font: 700 12px/44px "Open Sans", sans-serif; white-space: nowrap; }
.side h4 svg:first-child { margin-right: 7px; }
.side h4 .gear { margin-left: 12px; }
.side h4.later { height: 43px; margin-top: 9px; }
.side a { display: flex; align-items: center; height: 36px; padding-left: 23px; font-size: 14px; }
.side .current { padding-left: 12px; }
.current span { height: 26px; margin-top: 1px; padding: 0 11.500px 0 11px; border-radius: 13px; background: #aeb6be; color: #fff; font-weight: 700; line-height: 24px; }

/* heading */
.work { width: 1050px; }
.heading { display: flex; height: 85px; padding: 31px 0 0 14px; }
h1 { width: 751px; margin-top: -15px; font: 300 35px/50px "Open Sans", sans-serif; letter-spacing: -.5px; white-space: nowrap; }
.btn-sub { display: flex; align-items: center; width: 151px; height: 32px; padding-left: 12px; border-radius: 2px; background: #3bc8f5; color: #fff; font: 700 12px/32px "Open Sans", sans-serif; white-space: nowrap; }
.btn-sub span { margin-left: 8px; }
.btn-o { display: flex; align-items: center; justify-content: center; height: 32px; border: 1px solid #a1a6ae; border-radius: 2px; }
.bolt { width: 37px; margin-left: 12px; }
.list { width: 56px; margin-left: 12px; gap: 9px; }

/* task sheet */
.sheet { display: flex; width: 1030px; height: 520px; padding: 15px 15px 0; gap: 16px; background: #fff; }
.task { width: 704px; }
.tasknav { position: relative; display: grid; grid-template-columns: 137px 116px 126px 130px 1fr; height: 65px; padding: 0 0 9px 10px; border-bottom: 1px solid #eceef0; color: #535c69; font-size: 15px; }
.tasknav span { display: flex; align-items: center; white-space: nowrap; }
.tick { position: absolute; left: 217px; bottom: 0; width: 1px; height: 9px; background: #e6e8ea; }
.dash { border-bottom: 1px dashed currentColor; color: #1d64ae; font-size: 13px; }
.desc { height: 153px; margin-top: 10px; border: 1px solid #e4e0cb; border-top: 1px solid #d9d2b6; background: #f8f6e4; }
.desc-head { display: flex; height: 31px; padding: 9px 14px 0 14px; background: #f8f2da; border-bottom: 1px solid #e6e3cb; box-shadow: inset 0 2px 2px #eee6c8; }
.desc-head span { flex: 1; color: #98968b; font-size: 12px; line-height: 15px; }
.desc-head a { height: 14px; margin: -2px 0 0 4px; line-height: 14px; padding-bottom: 0; box-sizing: content-box; }
.desc-body { padding-left: 15px; }
h2 { margin-top: 13px; font-size: 17px; line-height: 22px; }
.desc-body p { margin: 12px 0 9px; line-height: 17px; color: #222; }
.desc-body b { display: block; font-size: 12px; line-height: 16px; }
.addline { margin-top: 4px; line-height: 15px; }
.meta { height: 63px; margin-top: 4px; padding: 11px 0 0 17px; border: 1px solid #ccd8d9; border-top-color: #aebbbf; background: #e9eff0; box-shadow: inset 0 0 2px #c6d0d2; }
.meta .tags { line-height: 17px; }
.meta .group { margin-top: 4px; font-size: 11.800px; line-height: 17px; }
.meta a { margin-left: 2px; }
.actions { display: flex; height: 39px; margin-top: 16px; }
.go { height: 39px; border-radius: 2px; background: #bbed21; color: #535c69; font: 700 12px/39px "Open Sans", sans-serif; text-align: center; }
.pause { width: 74px; margin-right: 12px; }
.finish { width: 76px; margin-right: 12px; }
.menu { width: 45px; padding: 13px 0 0 10px; border: 1px solid #c6cad0; border-radius: 2px; background: #ecedf0; }
.actions a { margin-right: 15px; color: #333; font-size: 12px; line-height: 38px; text-decoration: underline; }
.actions .menu + a { margin-left: 12px; }
.actions .postpone { color: #e08513; }
.actions .delete { color: #dc3030; }
.ctabs { position: relative; display: flex; gap: 5px; height: 34px; margin: 50px 0 -1px 2px; }
.ctabs span { height: 33px; padding: 0 14px; border: 1px solid #bacfd6; border-bottom: 0; border-radius: 5px 5px 0 0; background: linear-gradient(#f3f7fa, #e2edf6); color: #1d64ae; font-size: 11.500px; letter-spacing: .25px; font-weight: 700; line-height: 32px; white-space: nowrap; }
.ctabs .sel { height: 34px; background: #fff; color: #535c69; }
.cpanel { width: 700px; height: 70px; margin-left: 2px; padding: 11px; border: 1px solid #bacfd6; border-radius: 0 4px 0 0; }
.cbox { position: relative; display: flex; height: 60px; padding: 11px 0 0 19px; background: #f5f7f8; }
.notch { position: absolute; left: 26px; top: -10px; width: 0; height: 0; border: 10px solid transparent; border-top: 0; border-bottom-color: #f5f7f8; }
.avatar { width: 39px; height: 39px; padding: 7px 0 0 10.500px; border-radius: 50%; background: #535c69; }
.cbox span { margin: 10px 0 0 14px; color: #80868e; line-height: 18px; }

/* info panel */
.info { width: 280px; height: 436px; padding: 0 8px; border: 1px solid #bcd0d6; border-radius: 3px; box-shadow: 0 1px 2px #c7d2d6; color: #535353; }
.cap { display: flex; justify-content: space-between; height: 30px; padding: 10px 2px 0 3px; line-height: 15px; }
.cap a { color: #1d64ae; font-size: 11px; margin-top: -1px; }
.cap.second { height: 34px; padding-top: 14px; }
.person { display: flex; height: 50px; padding: 7px 0 0 7px; background: #eff4f5; color: #1d64ae; }
.person b { margin-left: 8px; line-height: 15px; letter-spacing: .08px; }
.pic { width: 36px; height: 36px; padding: 7px 0 0 8px; border: 1px solid #e0e4e6; background: #7c8490; box-shadow: inset 0 0 0 2px #fff; }
.pic svg { filter: drop-shadow(0 1px 1px #5c636e); }
.row { display: flex; height: 31px; border-bottom: 1px solid #e5e6e7; line-height: 15px; }
.row b { width: 78px; text-align: right; }
.row span { margin-left: 10px; }
.status { height: 55px; padding-top: 17px; }
.priority { padding-top: 7px; }
.priority .dash { color: #2a9a0a; }
.dot { display: inline-block; width: 9px; height: 9px; margin-right: 4px; border-radius: 50%; background: #6bb72e; }
.deadline { height: 34px; padding-top: 7px; }
.deadline span { padding-top: 2px; }
.rating { padding-top: 7px; }
.rating .dash { color: #7d7668; }
.report { height: 30px; padding-top: 7px; }
.wide { height: 27px; margin-top: 15px; border: 1px solid #d7dcde; border-bottom-color: #979ea1; border-radius: 3px; background: linear-gradient(#fafcfc, #dee8ec); box-shadow: 0 1px 1px #c3c7c9; color: #1d64ae; font-weight: 700; line-height: 24px; text-align: center; }
.observers { margin-top: 7px; }

/* floating messenger dock */
.dock { position: absolute; left: 1082px; top: 624px; display: flex; align-items: center; width: 188px; height: 35px; padding: 2px 0 0 7px; background: #68717e; color: #f0f2f4; }
.grip { width: 5px; height: 20px; margin-right: 15px; border: solid #8d949e; border-width: 0 1px; }
.dock svg { margin-right: 22px; }
.dock svg + svg { margin-right: 23px; }
.dock svg + svg + svg { margin-right: 5px; }
.dock b { width: 8px; margin-right: 16px; font: 700 12.500px/16px "Open Sans", sans-serif; }
.dock b + svg { margin-right: 0; }

/* scrollbar */
.scrollbar { position: relative; display: flex; flex-direction: column; align-items: center; width: 15px; padding-top: 6px; background: #f1f1f1; }
.up, .down { width: 0; height: 0; border: 4px solid transparent; }
.up { border-top: 0; border-bottom-color: #909090; margin-bottom: 4px; }
.thumb { width: 12px; height: 267px; border: 1px solid #969696; background: #a8a8a8; }
.down { margin-top: auto; margin-bottom: 5px; border-bottom: 0; border-top-color: #444; }
```
